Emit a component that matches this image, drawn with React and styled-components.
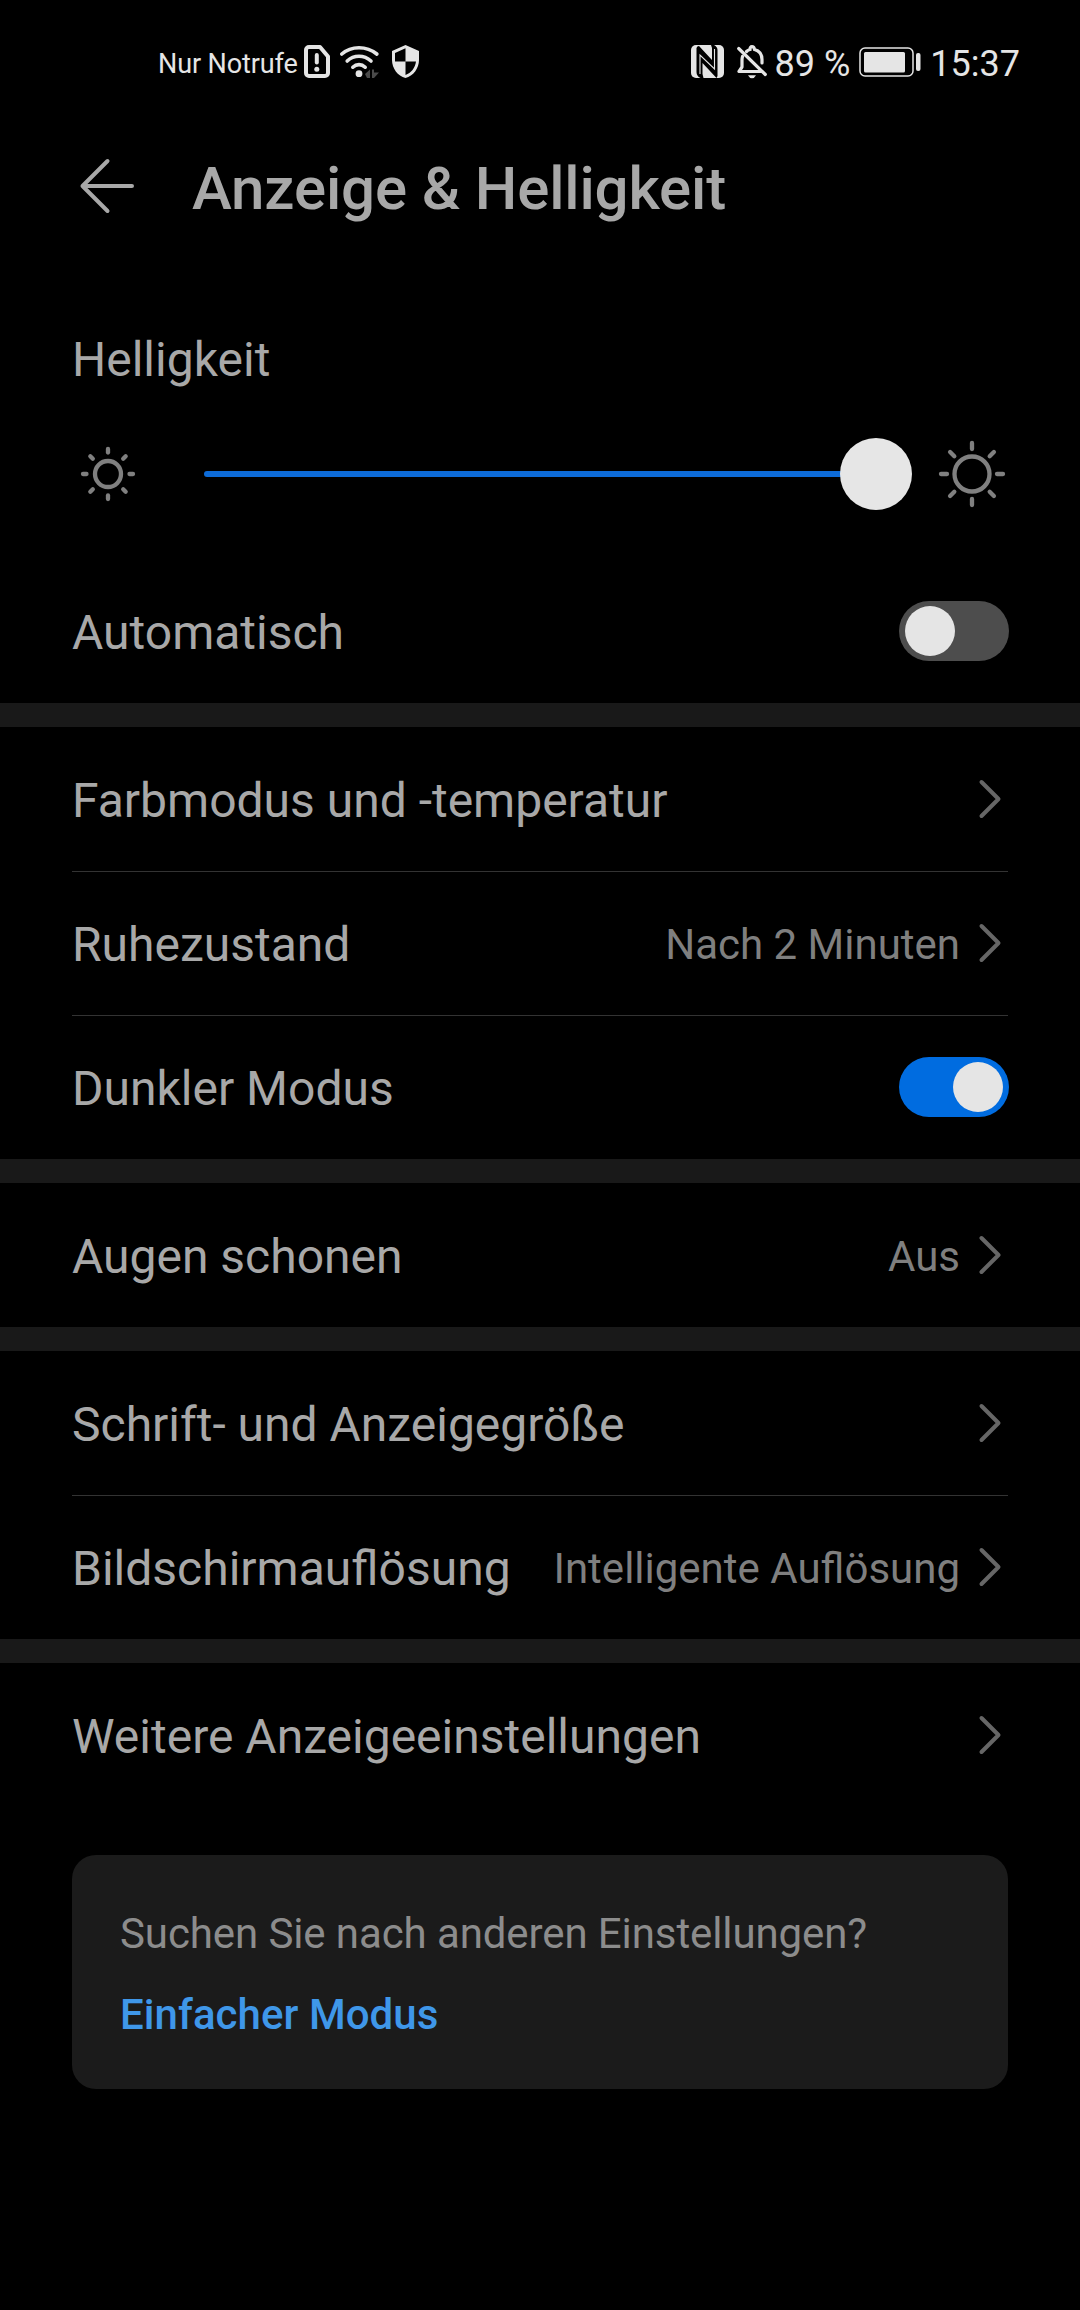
import { useState } from 'react';
import styled, { createGlobalStyle } from 'styled-components';

const GlobalStyle = createGlobalStyle`
  * {
    box-sizing: border-box;
  }

  body {
    margin: 0;
    background: #000;
    font-family: Roboto, sans-serif;
  }
`;

const Screen = styled.div`
  width: 1080px;
  height: 2310px;
  overflow: hidden;
  background: #000;
  color: #a8a8a8;
`;

const StatusBar = styled.header`
  display: flex;
  justify-content: space-between;
  height: 123px;
  padding: 36px 60px 36px 158px;
  color: #e5e5e5;
`;

const StatusGroup = styled.div`
  display: flex;
  align-items: center;
  height: 51px;
`;

const StatusText = styled.span`
  padding-top: 5px;
  padding-left: ${({ $lead }) => $lead || 0}px;
  font-size: ${({ $size }) => $size}px;
  line-height: 51px;
  letter-spacing: ${({ $tracking }) => $tracking || 0}px;
  white-space: nowrap;
`;

const StatusIcon = styled.svg`
  flex: none;
  display: block;
  margin-left: ${({ $gap }) => $gap || 0}px;
`;

const TitleBar = styled.div`
  display: flex;
  align-items: center;
  gap: 57px;
  height: 126px;
  padding-left: 78px;
`;

const BackButton = styled.button`
  display: flex;
  padding: 0;
  border: none;
  background: none;
  color: inherit;
  cursor: pointer;
`;

const Title = styled.h1`
  margin: 0;
  padding-top: 5px;
  font-size: 60px;
  font-weight: 500;
  line-height: 70px;
  letter-spacing: -0.15px;
  white-space: nowrap;
`;

const BrightnessLabel = styled.div`
  height: 153px;
  padding: 83px 72px 0;
  font-size: 48px;
  line-height: 56px;
`;

const BrightnessRow = styled.div`
  display: flex;
  align-items: center;
  height: 144px;
  padding: 0 72px;
  color: #808080;
`;

const SliderTrack = styled.div`
  display: flex;
  align-items: center;
  width: 708px;
  margin: 0 24px 0 60px;
`;

const SliderFill = styled.div`
  flex: 1;
  height: 6px;
  margin-right: -4px;
  border-radius: 3px;
  background: #0d6bd8;
`;

const SliderThumb = styled.div`
  width: 72px;
  height: 72px;
  border-radius: 50%;
  background: #e6e6e6;
`;

const Spacer = styled.div`
  height: 13px;
`;

const Group = styled.section`
  & + & {
    border-top: 24px solid #191919;
  }
`;

const Row = styled.div`
  display: flex;
  align-items: center;
  position: relative;
  height: 144px;
  margin: 0 72px;

  & + &::before {
    content: '';
    position: absolute;
    top: 0;
    left: 0;
    right: 0;
    height: 1px;
    background: #333;
  }
`;

const RowLabel = styled.span`
  flex: 1;
  padding-top: 3px;
  font-size: 48px;
  line-height: 56px;
  white-space: nowrap;
`;

const RowValue = styled.span`
  padding-top: 3px;
  margin-right: 18px;
  color: #7f7f7f;
  font-size: 42px;
  line-height: 50px;
  white-space: nowrap;
`;

const ChevronIcon = styled.svg`
  flex: none;
  margin-right: 6px;
  color: #666;
`;

const Switch = styled.button`
  display: flex;
  justify-content: ${({ $on }) => ($on ? 'flex-end' : 'flex-start')};
  width: 110px;
  height: 60px;
  margin-right: -1px;
  padding: 5px 6px;
  border: none;
  border-radius: 30px;
  background: ${({ $on }) => ($on ? '#006ce0' : '#4d4d4d')};
`;

const SwitchKnob = styled.span`
  width: 50px;
  height: 50px;
  border-radius: 50%;
  background: #e5e5e5;
`;

const SearchCard = styled.aside`
  display: flex;
  flex-direction: column;
  gap: 31px;
  height: 234px;
  margin: 48px 72px 0;
  padding: 54px 48px;
  border-radius: 24px;
  background: #1b1b1b;
  font-size: 42px;
  line-height: 50px;
`;

const CardHint = styled.span`
  color: #8c8c8c;
  letter-spacing: -0.1px;
  white-space: nowrap;
`;

const CardLink = styled.a`
  color: #3f97e9;
  font-weight: 500;
  letter-spacing: 0.06px;
`;

const SimIcon = () => (
  <StatusIcon $gap={6} width="26" height="33" viewBox="0 0 26 33" fill="none" stroke="currentColor" strokeWidth="4">
    <path d="M5 2h11l8 9.5V28a3 3 0 0 1-3 3H5a3 3 0 0 1-3-3V5a3 3 0 0 1 3-3z" strokeLinejoin="round" />
    <path d="M12.8 10v7.5" strokeLinecap="round" />
    <circle cx="12.8" cy="24.3" r="2.5" fill="currentColor" stroke="none" />
  </StatusIcon>
);

const WifiIcon = () => (
  <StatusIcon $gap={10} width="40" height="33" viewBox="0 0 40 33" fill="none">
    <g stroke="currentColor" strokeWidth="3.6" strokeLinecap="round">
      <path d="M1.8 9Q9 2.7 19 2.7T36.8 9" />
      <path d="M7.2 16Q12.2 11.3 19 11.3T31 16" />
      <path d="M12.8 22.2Q15.6 19.6 19 19.6T25.2 22.2" />
    </g>
    <circle cx="19" cy="28.7" r="3.4" fill="currentColor" />
    <path d="M25 29l5-4.5v8.5h-3zM32 24.5h2v3h5l-5 5.5h-2z" fill="#4a4a4a" />
  </StatusIcon>
);

const ShieldIcon = () => (
  <StatusIcon $gap={12} width="27" height="33" viewBox="3 1 18 22" fill="currentColor">
    <path d="M12 1L3 5v6c0 5.55 3.84 10.74 9 12 5.16-1.26 9-6.45 9-12V5l-9-4zm0 10.99h7c-.53 4.12-3.28 7.79-7 8.94V12H5V6.3l7-3.11v8.8z" />
  </StatusIcon>
);

const NfcIcon = () => (
  <StatusIcon width="33" height="33" viewBox="0 0 33 33">
    <rect width="33" height="33" rx="5" fill="currentColor" />
    <path d="M5.5 3Q6 1 8 1L21 15V3L20 0h3q3.500 2 3.500 5v26l-1 2L11.500 18v11l1 4h-3q-4-2-4-6z" fill="#000" />
    <path d="M9 29V10L23.500 24V4" fill="none" stroke="currentColor" strokeWidth="1.1" />
  </StatusIcon>
);

const BellOffIcon = () => (
  <StatusIcon $gap={13} width="30" height="34" viewBox="0 0 30 34" fill="none" stroke="currentColor" strokeWidth="3.2" strokeLinecap="round">
    <path d="M9.5 6.5Q11 5 13 4.5Q13 1.7 15 1.7T17.5 4.5Q25 6.5 25 14.5V18" />
    <path d="M5.5 11.5Q5 13 5 15v7l-3 4.5h22" strokeLinejoin="round" />
    <path d="M1.7 3.5L28.3 29.5" />
    <path d="M11 30.2h8q-1.5 3-4 3t-4-3z" fill="currentColor" stroke="none" />
  </StatusIcon>
);

const BatteryIcon = () => (
  <StatusIcon $gap={9} width="62" height="30" viewBox="0 0 62 30">
    <rect x="1" y="1" width="53" height="28" rx="5" fill="none" stroke="currentColor" strokeWidth="1.5" />
    <rect x="5" y="5" width="41" height="20.5" rx="1.5" fill="currentColor" />
    <rect x="57" y="6" width="4.5" height="18" rx="2" fill="currentColor" />
  </StatusIcon>
);

const BackIcon = () => (
  <svg width="57" height="60" viewBox="0 0 57 60" fill="none" stroke="currentColor" strokeWidth="4" strokeLinecap="round" strokeLinejoin="round">
    <path d="M29.5 5L4.5 30l25 25M4.5 30H54" />
  </svg>
);

const SunIcon = ({ radius, from, to }) => (
  <svg width="72" height="72" viewBox="-36 -36 72 72" fill="none" stroke="currentColor" strokeWidth="4.3" strokeLinecap="round">
    <circle r={radius} />
    {[0, 45, 90, 135, 180, 225, 270, 315].map((angle) => (
      <path key={angle} d={`M0 ${-from}V${-to}`} transform={`rotate(${angle})`} />
    ))}
  </svg>
);

const Chevron = () => (
  <ChevronIcon width="24" height="42" viewBox="0 0 24 42" fill="none" stroke="currentColor" strokeWidth="4" strokeLinecap="round" strokeLinejoin="round">
    <path d="M3.5 4l17 17-17 17" />
  </ChevronIcon>
);

const LinkRow = ({ label, value }) => (
  <Row>
    <RowLabel>{label}</RowLabel>
    {value && <RowValue>{value}</RowValue>}
    <Chevron />
  </Row>
);

const SwitchRow = ({ label, on, onToggle }) => (
  <Row>
    <RowLabel>{label}</RowLabel>
    <Switch type="button" role="switch" aria-checked={on} $on={on} onClick={onToggle}>
      <SwitchKnob />
    </Switch>
  </Row>
);

const App = () => {
  const [automatic, setAutomatic] = useState(false);
  const [darkMode, setDarkMode] = useState(true);

  return (
    <Screen>
      <GlobalStyle />

      <StatusBar>
        <StatusGroup>
          <StatusText $size={27} $tracking={-0.1}>Nur Notrufe</StatusText>
          <SimIcon />
          <WifiIcon />
          <ShieldIcon />
        </StatusGroup>
        <StatusGroup>
          <NfcIcon />
          <BellOffIcon />
          <StatusText $size={36} $lead={8}>89 %</StatusText>
          <BatteryIcon />
          <StatusText $size={36} $lead={9}>15:37</StatusText>
        </StatusGroup>
      </StatusBar>

      <TitleBar>
        <BackButton type="button">
          <BackIcon />
        </BackButton>
        <Title>Anzeige &amp; Helligkeit</Title>
      </TitleBar>

      <Group>
        <BrightnessLabel>Helligkeit</BrightnessLabel>
        <BrightnessRow>
          <SunIcon radius={13} from={21.5} to={25} />
          <SliderTrack>
            <SliderFill />
            <SliderThumb />
          </SliderTrack>
          <SunIcon radius={17.5} from={25} to={31} />
        </BrightnessRow>
        <Spacer />
        <SwitchRow label="Automatisch" on={automatic} onToggle={() => setAutomatic(!automatic)} />
      </Group>

      <Group>
        <LinkRow label="Farbmodus und -temperatur" />
        <LinkRow label="Ruhezustand" value="Nach 2 Minuten" />
        <SwitchRow label="Dunkler Modus" on={darkMode} onToggle={() => setDarkMode(!darkMode)} />
      </Group>

      <Group>
        <LinkRow label="Augen schonen" value="Aus" />
      </Group>

      <Group>
        <LinkRow label="Schrift- und Anzeigegröße" />
        <LinkRow label="Bildschirmauflösung" value="Intelligente Auflösung" />
      </Group>

      <Group>
        <LinkRow label="Weitere Anzeigeeinstellungen" />
      </Group>

      <SearchCard>
        <CardHint>Suchen Sie nach anderen Einstellungen?</CardHint>
        <CardLink>Einfacher Modus</CardLink>
      </SearchCard>
    </Screen>
  );
};

export default App;
